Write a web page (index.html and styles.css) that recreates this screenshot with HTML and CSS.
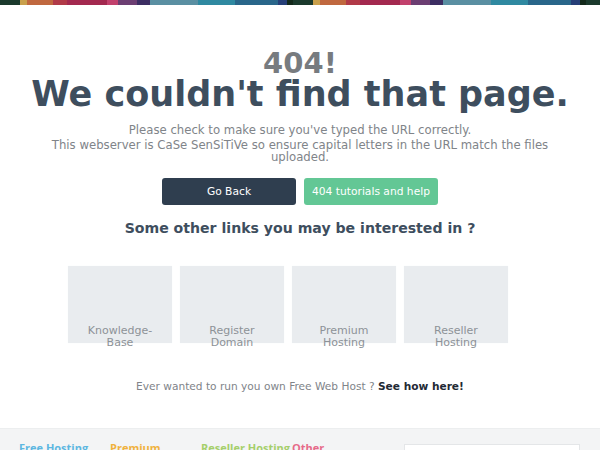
FILE: index.html
```html
<!DOCTYPE html>
<html lang="en">
<head>
    <meta charset="UTF-8">
    <meta name="viewport" content="width=device-width, initial-scale=1.0">
    <title>404 - Page not found</title>
    <link rel="stylesheet" href="styles.css">
</head>
<body>
    <div class="stripe"></div>

    <div class="error-page">
        <h2 class="code">404!</h2>
        <h1 class="title">We couldn't find that page.</h1>
        <p class="lead">Please check to make sure you've typed the URL correctly.</p>
        <p class="note">This webserver is CaSe SenSiTiVe so ensure capital letters in the URL match the files uploaded.</p>

        <div class="actions">
            <a href="#" class="btn btn-dark">Go Back</a>
            <a href="#" class="btn btn-green">404 tutorials and help</a>
        </div>

        <h3 class="other">Some other links you may be interested in ?</h3>

        <div class="links">
            <a href="#" class="link-card"><span>Knowledge-Base</span></a>
            <a href="#" class="link-card"><span>Register Domain</span></a>
            <a href="#" class="link-card"><span>Premium Hosting</span></a>
            <a href="#" class="link-card"><span>Reseller Hosting</span></a>
        </div>

        <p class="own-host">Ever wanted to run you own Free Web Host ? <a href="#">See how here!</a></p>
    </div>

    <footer class="footer">
        <div class="footer-cols">
            <div class="col blue">Free Hosting</div>
            <div class="col orange">Premium</div>
            <div class="col green">Reseller Hosting</div>
            <div class="col pink">Other</div>
        </div>
        <input class="search" type="text">
    </footer>
</body>
</html>
```

FILE: styles.css
```css
/* Barra de colores arriba */
.stripe {
    height: 5px;
    background: repeating-linear-gradient(90deg,
        #1b3a2d 0px, #1b3a2d 20px,
        #c9a04c 20px, #c9a04c 27px,
        #c0683f 27px, #c0683f 53px,
        #b13a48 53px, #b13a48 67px,
        #a3294f 67px, #a3294f 107px,
        #c2416d 107px, #c2416d 118px,
        #6c3e72 118px, #6c3e72 137px,
        #3c2e63 137px, #3c2e63 150px,
        #5a8fa2 150px, #5a8fa2 198px,
        #2f89a1 198px, #2f89a1 235px,
        #29668a 235px, #29668a 278px,
        #263f78 278px, #263f78 287px,
        #13291b 287px, #13291b 293px);
}

body {
    margin: 0;
    font-family: "DejaVu Sans", Verdana, sans-serif;
    background: #fff;
    color: #3e4e5e;
}

.error-page {
    text-align: center;
    padding-top: 43px;
    height: 423px;
    box-sizing: border-box;
}

.code {
    margin: 0;
    font-size: 29px;
    line-height: 30px;
    color: #777b7f;
}

.title {
    margin: 0;
    font-size: 35px;
    line-height: 32px;
    color: #3e4e5e;
}

.lead,
.note {
    margin: 0;
    font-size: 11.7px;
    color: #808489;
    width: 500px;
    margin-left: auto;
    margin-right: auto;
}

.lead {
    margin-top: 13px;
    line-height: 14px;
}

.note {
    line-height: 12px;
    margin-top: 2px;
}

.actions {
    display: flex;
    justify-content: center;
    gap: 8px;
    margin-top: 15px;
}

.btn {
    display: block;
    width: 134px;
    height: 27px;
    line-height: 27px;
    border-radius: 3px;
    font-size: 10.7px;
    color: #fff;
    text-decoration: none;
}

.btn-dark {
    background: #2f3e4f;
}

.btn-green {
    background: #63c795;
}

.other {
    margin: 14px 0 0;
    font-size: 14.1px;
    line-height: 18px;
    color: #3e4e5e;
}

.links {
    display: flex;
    width: 480px;
    margin: 29px auto 0;
}

.link-card {
    display: flex;
    align-items: flex-end;
    justify-content: center;
    width: 104px;
    height: 77px;
    margin-left: 8px;
    background: #e9ecef;
    box-shadow: 0 0 1px #f4f5f6;
    color: #8d9297;
    font-size: 11px;
    line-height: 12px;
    text-decoration: none;
}

.link-card span {
    width: 70px;
    margin-bottom: -6px;
}

.own-host {
    margin: 37px 0 0;
    font-size: 10.6px;
    color: #808489;
}

.own-host a {
    color: #1f2a35;
    font-weight: bold;
    text-decoration: none;
}

.footer {
    display: flex;
    justify-content: space-between;
    align-items: flex-start;
    background: #f3f4f5;
    border-top: 1px solid #eceeef;
    padding: 12px 20px 0 19px;
    height: 40px;
}

.footer-cols {
    display: flex;
    font-family: "Open Sans", sans-serif;
    font-size: 11px;
    font-weight: bold;
    line-height: 13px;
    white-space: nowrap;
}

.col {
    width: 91px;
}

.blue {
    color: #5db7e1;
}

.orange {
    color: #f0b23e;
}

.green {
    color: #a5cf6b;
}

.pink {
    color: #e66a89;
}

.search {
    width: 176px;
    height: 24px;
    border: 1px solid #e4e6e8;
    background: #fff;
    box-sizing: border-box;
    margin: 3px 0 0;
}
```
